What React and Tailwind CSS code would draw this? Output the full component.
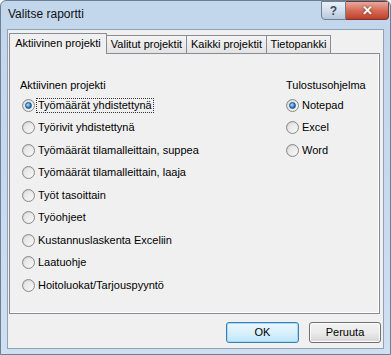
import React from 'react';

const font = { fontFamily: '"Liberation Sans", Arial, sans-serif' };

function Radio({ checked }) {
  return (
    <span className="relative flex h-[13px] w-[13px] shrink-0 items-center justify-center rounded-full border border-[#8a8a8a] bg-linear-to-br from-[#c9c9c9] to-[#fbfbfb]">
      <span className="flex h-[9px] w-[9px] items-center justify-center rounded-full bg-linear-to-br from-[#e2e2e2] to-[#f7f7f7]">
        {checked && (
          <span className="h-[7px] w-[7px] rounded-full border border-[#1b4f86] bg-radial-[at_35%_35%] from-[#b8e2fb] via-[#3a8bd2] to-[#114a8a]" />
        )}
      </span>
    </span>
  );
}

function Option({ label, checked, focused, indent }) {
  return (
    <div className={`flex h-[22.5px] items-center ${indent ? 'pl-[2px]' : ''}`}>
      <Radio checked={checked} />
      <span
        className={`ml-[1px] px-[1px] leading-[13px] ${
          focused ? 'border border-dotted border-[#333]' : 'border border-transparent'
        }`}
      >
        {label}
      </span>
    </div>
  );
}

const reports = [
  'Työmäärät yhdistettynä',
  'Työrivit yhdistettynä',
  'Työmäärät tilamalleittain, suppea',
  'Työmäärät tilamalleittain, laaja',
  'Työt tasoittain',
  'Työohjeet',
  'Kustannuslaskenta Exceliin',
  'Laatuohje',
  'Hoitoluokat/Tarjouspyyntö',
];

const programs = ['Notepad', 'Excel', 'Word'];

const tabs = [
  { label: 'Valitut projektit', w: 'w-[81px]' },
  { label: 'Kaikki projektit', w: 'w-[81px]' },
  { label: 'Tietopankki', w: 'w-[65px]' },
];

export default function App() {
  return (
    <div
      style={font}
      className="flex h-[355px] w-[391px] flex-col overflow-hidden rounded-t-[6px] border border-[#6c7f95] bg-linear-to-b from-[#c2d6ec] via-[#c7d9ed] to-[#cfe0f1] text-[11px] text-black"
    >
      {/* Title bar */}
      <div className="flex h-[29px] items-start justify-between">
        <div className="mt-[6px] pl-[7px] text-[12px] leading-[14px] text-[#111]">Valitse raportti</div>
        <div className="mr-[1px] flex">
          <div className="flex h-[19px] w-[25px] items-center justify-center rounded-bl-[4px] border border-[#6e7f93] bg-linear-to-b from-[#e9eff6] via-[#d3dfec] to-[#b5c7da] text-[12px] font-bold leading-none text-[#3d4a5a]">
            ?
          </div>
          <div className="flex h-[19px] w-[43px] items-center justify-center rounded-br-[4px] border border-l-0 border-[#6b3a34] bg-linear-to-b from-[#e9a99c] via-[#d46a57] to-[#c23e25] text-[13px] font-bold leading-none text-white [text-shadow:0_0_2px_#4a1a10]">
            ✕
          </div>
        </div>
      </div>

      {/* Client area */}
      <div className="mx-[7px] mb-[6px] flex flex-1 flex-col bg-[#f0f0f0] shadow-[0_0_0_1px_#8fa3b8]">
        {/* Tabs */}
        <div className="relative z-10 mt-[3px] flex h-[20px] items-end pl-[1px]">
          <div className="-mb-px flex h-[21px] w-[98px] items-center justify-center border border-b-0 border-[#898c95] bg-[#f0f0f0] pb-[1px]">
            Aktiivinen projekti
          </div>
          {tabs.map((t) => (
            <div
              key={t.label}
              className={`flex h-[18px] ${t.w} -ml-px items-center justify-center border border-b-0 border-[#898c95] bg-linear-to-b from-[#f4f4f4] to-[#e3e3e3]`}
            >
              {t.label}
            </div>
          ))}
        </div>

        {/* Panel */}
        <div className="ml-[1px] flex h-[261px] w-[371px] border border-[#898c95] bg-[#f0f0f0] pl-[10px] pt-[25px] shadow-[inset_-1px_-1px_0_#fff]">
          <div className="w-[266px]">
            <div className="h-[13px] leading-[13px]">Aktiivinen projekti</div>
            <div className="mt-[2px]">
              {reports.map((r, i) => (
                <Option key={r} label={r} checked={i === 0} focused={i === 0} indent />
              ))}
            </div>
          </div>
          <div>
            <div className="h-[13px] leading-[13px]">Tulostusohjelma</div>
            <div className="mt-[2px]">
              {programs.map((p, i) => (
                <Option key={p} label={p} checked={i === 0} />
              ))}
            </div>
          </div>
        </div>

        {/* Buttons */}
        <div className="mt-[8px] flex justify-end gap-[10px] pr-[2px]">
          <button className="h-[21px] w-[73px] rounded-[3px] border border-[#3c7fb1] bg-linear-to-b from-[#eaf6fd] via-[#d9f0fc] to-[#bee6fd] shadow-[inset_0_0_0_1px_#9fdcf8] leading-none">
            OK
          </button>
          <button className="h-[21px] w-[72px] rounded-[3px] border border-[#707070] bg-linear-to-b from-[#f2f2f2] via-[#ebebeb] to-[#d6d6d6] shadow-[inset_0_0_0_1px_#fcfcfc] leading-none">
            Peruuta
          </button>
        </div>
      </div>
    </div>
  );
}
